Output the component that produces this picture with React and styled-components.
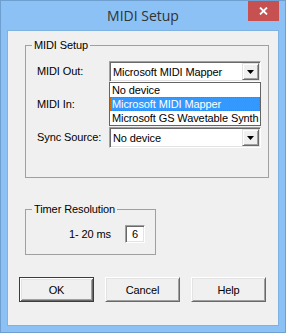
import React from 'react';
import styled, { createGlobalStyle, css } from 'styled-components';

const Global = createGlobalStyle`
  html, body { margin: 0; padding: 0; background: #8bc1f4; }
  body { font-family: "Liberation Sans", Arial, sans-serif; }
`;

const Window = styled.div`
  box-sizing: border-box;
  width: 286px;
  height: 333px;
  border: 1px solid #6f9fd0;
  background: #8bc1f4;
  padding: 0 6px 6px 6px;
  display: flex;
  flex-direction: column;
`;

const TitleBar = styled.div`
  height: 29px;
  display: grid;
  grid-template-columns: 31px 1fr 31px;
  align-items: start;
`;

const Title = styled.div`
  grid-column: 2;
  text-align: center;
  font-family: "Open Sans", "Noto Sans", sans-serif;
  font-size: 14px;
  line-height: 29px;
  color: #333;
`;

const CloseButton = styled.div`
  grid-column: 3;
  height: 20px;
  background: #c75050;
  display: flex;
  align-items: center;
  justify-content: center;
`;

const Client = styled.div`
  flex: 1;
  border: 1px solid #7fb1e1;
  background: #f0f0f0;
  display: flex;
  flex-direction: column;
  align-items: flex-start;
  font-size: 11px;
  letter-spacing: -0.1px;
  color: #000;
`;

const GroupBox = styled.fieldset`
  box-sizing: border-box;
  margin: ${p => p.$mt}px 0 0 17px;
  width: ${p => p.$w}px;
  min-width: 0;
  padding: 0;
  border: 1px solid #a0a0a0;
`;

const Legend = styled.legend`
  margin-left: 6px;
  padding: 0 2px;
  font-size: 11px;
  line-height: 13px;
`;

const FormGrid = styled.div`
  display: grid;
  grid-template-columns: 72px 152px;
  grid-auto-rows: 21px;
  row-gap: 12px;
  align-items: center;
  padding: 9px 0 29px 11px;
`;

const Label = styled.span`
  white-space: nowrap;
  line-height: 13px;
`;

const Combo = styled.div`
  position: relative;
  box-sizing: border-box;
  height: 21px;
  border: 1px solid;
  border-color: #a0a0a0 #fff #fff #a0a0a0;
  box-shadow: inset 1px 1px #696969, inset -1px -1px #e3e3e3;
  background: #fff;
  padding: 1px;
  display: flex;
  align-items: center;
`;

const ComboText = styled.span`
  flex: 1;
  padding-left: 2px;
  white-space: nowrap;
  overflow: hidden;
`;

const DropButton = styled.div`
  box-sizing: border-box;
  width: 17px;
  height: 17px;
  background: #f0f0f0;
  border: 1px solid;
  border-color: #e3e3e3 #696969 #696969 #e3e3e3;
  box-shadow: inset 1px 1px #fff, inset -1px -1px #a0a0a0;
  display: flex;
  align-items: center;
  justify-content: center;
`;

const DropList = styled.div`
  position: absolute;
  top: 20px;
  left: -1px;
  width: 152px;
  box-sizing: border-box;
  border: 1px solid #646464;
  background: #fff;
  z-index: 5;
`;

const ListItem = styled.div`
  box-sizing: border-box;
  height: 14px;
  line-height: 14px;
  padding: 0 1px 0 2px;
  white-space: nowrap;
  overflow: hidden;
  ${p => p.$selected && css`
    background: #3399ff;
    color: #fff;
    outline: 1px dotted #cc6600;
    outline-offset: -1px;
  `}
`;

const TimerRow = styled.div`
  display: grid;
  grid-template-columns: 56px 20px;
  align-items: center;
  padding: 9px 0 11px 43px;
`;

const Edit = styled.div`
  box-sizing: border-box;
  width: 20px;
  height: 18px;
  border: 1px solid;
  border-color: #a0a0a0 #fff #fff #a0a0a0;
  box-shadow: inset 1px 1px #696969, inset -1px -1px #e3e3e3;
  background: #fff;
  display: flex;
  align-items: center;
  justify-content: center;
  font-size: 11px;
`;

const ButtonRow = styled.div`
  margin: 22px 0 0 11px;
  width: 247px;
  display: flex;
  justify-content: space-between;
`;

const Button = styled.button`
  box-sizing: border-box;
  width: 75px;
  height: 25px;
  padding: 0;
  font-family: "Liberation Sans", Arial, sans-serif;
  font-size: 11px;
  letter-spacing: -0.1px;
  color: #000;
  background: #f0f0f0;
  border: 1px solid;
  border-color: #fff #696969 #696969 #fff;
  box-shadow: inset 1px 1px #e3e3e3, inset -1px -1px #a0a0a0;
  ${p => p.$default && css`
    border-color: #3c3c3c;
    box-shadow: inset 1px 1px #fff, inset -1px -1px #696969, inset 2px 2px #e3e3e3, inset -2px -2px #a0a0a0;
  `}
`;

const Arrow = () => (
  <svg width="7" height="4" viewBox="0 0 7 4">
    <path d="M0 0H7L3.5 4Z" fill="#000" />
  </svg>
);

const ComboBox = ({ value, children }) => (
  <Combo>
    <ComboText>{value}</ComboText>
    <DropButton><Arrow /></DropButton>
    {children}
  </Combo>
);

export default function App() {
  return (
    <>
      <Global />
      <Window>
        <TitleBar>
          <Title>MIDI Setup</Title>
          <CloseButton>
            <svg width="9" height="8" viewBox="0 0 9 8">
              <path d="M1 0.5L8 7.5M8 0.5L1 7.5" stroke="#fff" strokeWidth="1.8" />
            </svg>
          </CloseButton>
        </TitleBar>
        <Client>
          <GroupBox $mt={8} $w={244}>
            <Legend>MIDI Setup</Legend>
            <FormGrid>
              <Label>MIDI Out:</Label>
              <ComboBox value="Microsoft MIDI Mapper">
                <DropList>
                  <ListItem>No device</ListItem>
                  <ListItem $selected>Microsoft MIDI Mapper</ListItem>
                  <ListItem>Microsoft GS Wavetable Synth</ListItem>
                </DropList>
              </ComboBox>
              <Label>MIDI In:</Label>
              <ComboBox value="" />
              <Label>Sync Source:</Label>
              <ComboBox value="No device" />
            </FormGrid>
          </GroupBox>
          <GroupBox $mt={25} $w={131}>
            <Legend>Timer Resolution</Legend>
            <TimerRow>
              <Label>1- 20 ms</Label>
              <Edit>6</Edit>
            </TimerRow>
          </GroupBox>
          <ButtonRow>
            <Button $default>OK</Button>
            <Button>Cancel</Button>
            <Button>Help</Button>
          </ButtonRow>
        </Client>
      </Window>
    </>
  );
}
